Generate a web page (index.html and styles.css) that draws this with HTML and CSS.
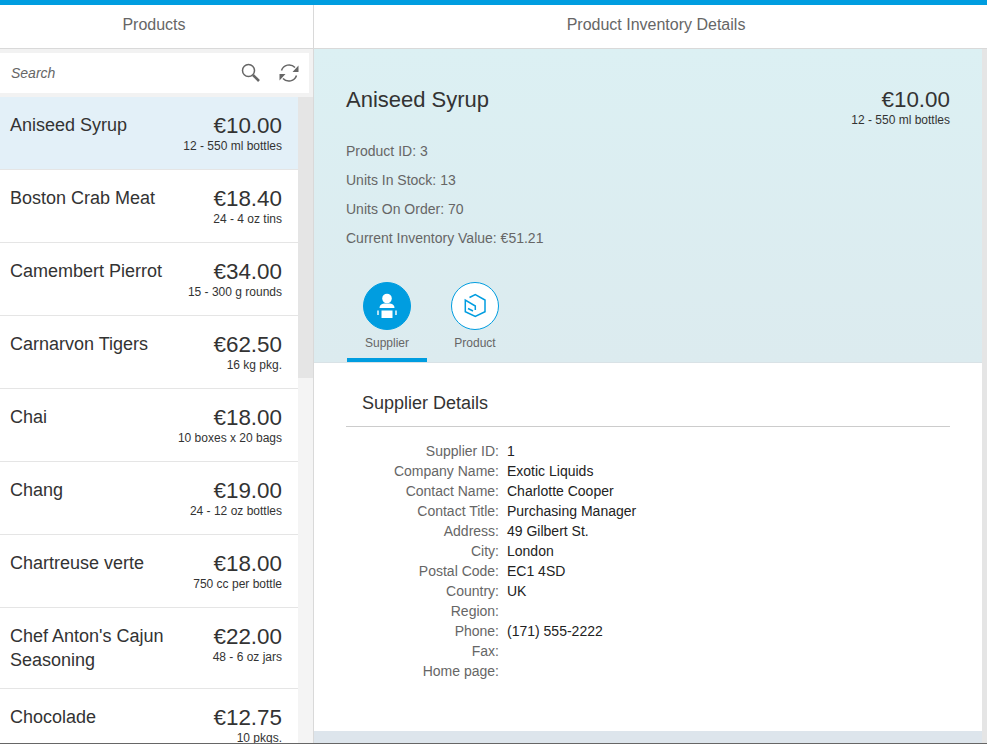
FILE: index.html
```html
<!DOCTYPE html>
<html lang="en">
<head>
<meta charset="utf-8">
<title>Product Inventory</title>
<link rel="stylesheet" href="styles.css">
</head>
<body>
<div class="app">
  <aside class="master">
    <header class="head head-master">Products</header>
    <div class="searchwrap">
      <div class="search">
        <span class="placeholder">Search</span>
        <svg class="ico" viewBox="0 0 20 20" width="20" height="20"><circle cx="7.500" cy="7.500" r="6" fill="none" stroke="#666" stroke-width="1.500"/><path d="M12 12L18 18" stroke="#666" stroke-width="2.600"/></svg>
        <svg class="ico" viewBox="0 0 20 20" width="20" height="20"><path d="M2.500 7.500A8 8 0 0 1 16 4.500M17.500 12.500A8 8 0 0 1 4 15.500" fill="none" stroke="#666" stroke-width="1.500"/><path d="M19.500 2.500V9H13.500ZM.5 17.500V11H6.500Z" fill="#666"/></svg>
      </div>
    </div>
    <div class="listwrap">
      <ul class="list">
        <li class="item sel"><div class="name">Aniseed Syrup</div><div class="right"><div class="price">€10.00</div><div class="unit">12 - 550 ml bottles</div></div></li>
        <li class="item"><div class="name">Boston Crab Meat</div><div class="right"><div class="price">€18.40</div><div class="unit">24 - 4 oz tins</div></div></li>
        <li class="item"><div class="name">Camembert Pierrot</div><div class="right"><div class="price">€34.00</div><div class="unit">15 - 300 g rounds</div></div></li>
        <li class="item"><div class="name">Carnarvon Tigers</div><div class="right"><div class="price">€62.50</div><div class="unit">16 kg pkg.</div></div></li>
        <li class="item"><div class="name">Chai</div><div class="right"><div class="price">€18.00</div><div class="unit">10 boxes x 20 bags</div></div></li>
        <li class="item"><div class="name">Chang</div><div class="right"><div class="price">€19.00</div><div class="unit">24 - 12 oz bottles</div></div></li>
        <li class="item"><div class="name">Chartreuse verte</div><div class="right"><div class="price">€18.00</div><div class="unit">750 cc per bottle</div></div></li>
        <li class="item tall"><div class="name">Chef Anton's Cajun Seasoning</div><div class="right"><div class="price">€22.00</div><div class="unit">48 - 6 oz jars</div></div></li>
        <li class="item"><div class="name">Chocolade</div><div class="right"><div class="price">€12.75</div><div class="unit">10 pkgs.</div></div></li>
      </ul>
      <div class="scrollbar"><div class="thumb"></div></div>
    </div>
  </aside>
  <main class="detail">
    <header class="head head-detail">Product Inventory Details</header>
    <div class="detailbody">
      <div class="content">
        <section class="objhead">
          <div class="titlerow">
            <h1 class="title">Aniseed Syrup</h1>
            <div class="objprice"><div class="bigprice">€10.00</div><div class="unit">12 - 550 ml bottles</div></div>
          </div>
          <div class="attrs">
            <div class="attr">Product ID: 3</div>
            <div class="attr">Units In Stock: 13</div>
            <div class="attr">Units On Order: 70</div>
            <div class="attr">Current Inventory Value: €51.21</div>
          </div>
          <div class="tabs">
            <div class="tab active">
              <span class="circle filled">
                <svg viewBox="0 0 32 32" width="32" height="32"><circle cx="16" cy="8.500" r="4.800" fill="#fff"/><path d="M8.500 18Q8.500 14 13 13.500H19Q23.500 14 23.500 18Z" fill="#fff"/><path d="M10.500 20.500H21.500V28H10.500Z" fill="#fff"/><path d="M6.300 20.500H7.700V25H6.300ZM24.300 20.500H25.700V25H24.300Z" fill="#fff"/></svg>
              </span>
              <span class="tablabel">Supplier</span>
            </div>
            <div class="tab">
              <span class="circle">
                <svg viewBox="0 0 32 32" width="32" height="32"><path d="M10.500 7.500L16.300 4.500L26 10V21.700L16.300 26.500L6.300 21.700V10L16.300 16V20M9 18.500L14 21" fill="none" stroke="#009de0" stroke-width="1.500"/></svg>
              </span>
              <span class="tablabel">Product</span>
            </div>
          </div>
        </section>
        <section class="panel">
          <h2 class="paneltitle">Supplier Details</h2>
          <dl class="form">
            <dt>Supplier ID:</dt><dd>1</dd>
            <dt>Company Name:</dt><dd>Exotic Liquids</dd>
            <dt>Contact Name:</dt><dd>Charlotte Cooper</dd>
            <dt>Contact Title:</dt><dd>Purchasing Manager</dd>
            <dt>Address:</dt><dd>49 Gilbert St.</dd>
            <dt>City:</dt><dd>London</dd>
            <dt>Postal Code:</dt><dd>EC1 4SD</dd>
            <dt>Country:</dt><dd>UK</dd>
            <dt>Region:</dt><dd></dd>
            <dt>Phone:</dt><dd>(171) 555-2222</dd>
            <dt>Fax:</dt><dd></dd>
            <dt>Home page:</dt><dd></dd>
          </dl>
        </section>
        <div class="footband"></div>
      </div>
      <div class="vbar"></div>
    </div>
  </main>
</div>
</body>
</html>
```
FILE: styles.css
```css
* { box-sizing: border-box; }
html, body { margin: 0; padding: 0; height: 100%; overflow: hidden; }
body { font-family: "Liberation Sans", Arial, sans-serif; color: #333; background: #fff; }
.app { display: flex; height: 744px; border-top: 5px solid #009de0; border-bottom: 1px solid #666; }
.master { width: 314px; flex: none; display: flex; flex-direction: column; border-right: 1px solid #d9d9d9; }
.detail { flex: 1; min-width: 0; display: flex; flex-direction: column; }
.head { height: 44px; flex: none; display: flex; align-items: center; justify-content: center; padding-bottom: 4px; font-size: 16px; color: #666; background: #fff; border-bottom: 1px solid #d9d9d9; }
.head-master { padding-right: 5px; }
.head-detail { padding-left: 11px; }
.searchwrap { height: 48px; flex: none; background: #f2f2f2; padding: 4px 4px 4px 0; }
.search { height: 40px; background: #fff; display: flex; align-items: center; gap: 18px; padding: 0 10px 0 11px; }
.placeholder { flex: 1; font-size: 14px; font-style: italic; color: #666; }
.ico { display: block; flex: none; }
.listwrap { flex: 1; min-height: 0; display: flex; overflow: hidden; }
.list { list-style: none; margin: 0; padding: 0; flex: 1; min-width: 0; }
.scrollbar { width: 15px; flex: none; background: #f4f4f4; }
.thumb { height: 281px; background: #e5e5e5; }
.item { height: 73px; display: flex; justify-content: space-between; padding: 16px 16px 0 10px; border-bottom: 1px solid #e5e5e5; background: #fff; }
.item.tall { height: 81px; }
.item.sel { background: #e3f0f8; }
.name { font-size: 18px; line-height: 24px; color: #333; width: 170px; }
.right { text-align: right; flex: none; }
.price { font-size: 22.400px; line-height: 25px; color: #333; }
.unit { font-size: 12px; line-height: 14px; margin-top: 1px; color: #333; }
.detailbody { flex: 1; min-height: 0; display: flex; }
.content { flex: 1; min-width: 0; display: flex; flex-direction: column; }
.vbar { width: 5px; flex: none; background: #e5e5e5; }
.objhead { height: 314px; flex: none; background: linear-gradient(#dcf0f3, #dcebef); padding: 37px 32px 0; border-bottom: 1px solid #d9e2e6; }
.titlerow { display: flex; justify-content: space-between; }
.title { margin: 0; font-size: 22px; font-weight: 400; line-height: 28px; color: #333; }
.objprice { text-align: right; padding-top: 1px; }
.bigprice { font-size: 22.400px; line-height: 25px; color: #333; }
.attrs { margin-top: 16px; }
.attr { font-size: 14px; line-height: 17px; margin-bottom: 12px; color: #666; }
.tabs { display: flex; gap: 8px; margin-top: 35px; margin-left: 1px; }
.tab { width: 80px; height: 80px; display: flex; flex-direction: column; align-items: center; border-bottom: 4px solid transparent; }
.tab.active { border-bottom-color: #009de0; }
.circle { width: 48px; height: 48px; border-radius: 50%; display: flex; align-items: center; justify-content: center; background: #fff; border: 1px solid #009de0; }
.circle.filled { background: #009de0; }
.tablabel { font-size: 12px; line-height: 14px; margin-top: 6px; color: #666; }
.panel { flex: 1; min-height: 0; padding: 0 32px; background: #fff; }
.paneltitle { margin: 0; height: 64px; padding: 28px 0 0 16px; font-size: 18px; line-height: 24px; font-weight: 400; color: #333; border-bottom: 1px solid #ccc; }
.form { margin: 14px 0 0; display: grid; grid-template-columns: 153px 1fr; column-gap: 8px; font-size: 14px; line-height: 20px; }
.form dt { text-align: right; color: #666; }
.form dd { margin: 0; color: #222; min-height: 20px; }
.footband { height: 12px; flex: none; background: #dde5ec; }
```
